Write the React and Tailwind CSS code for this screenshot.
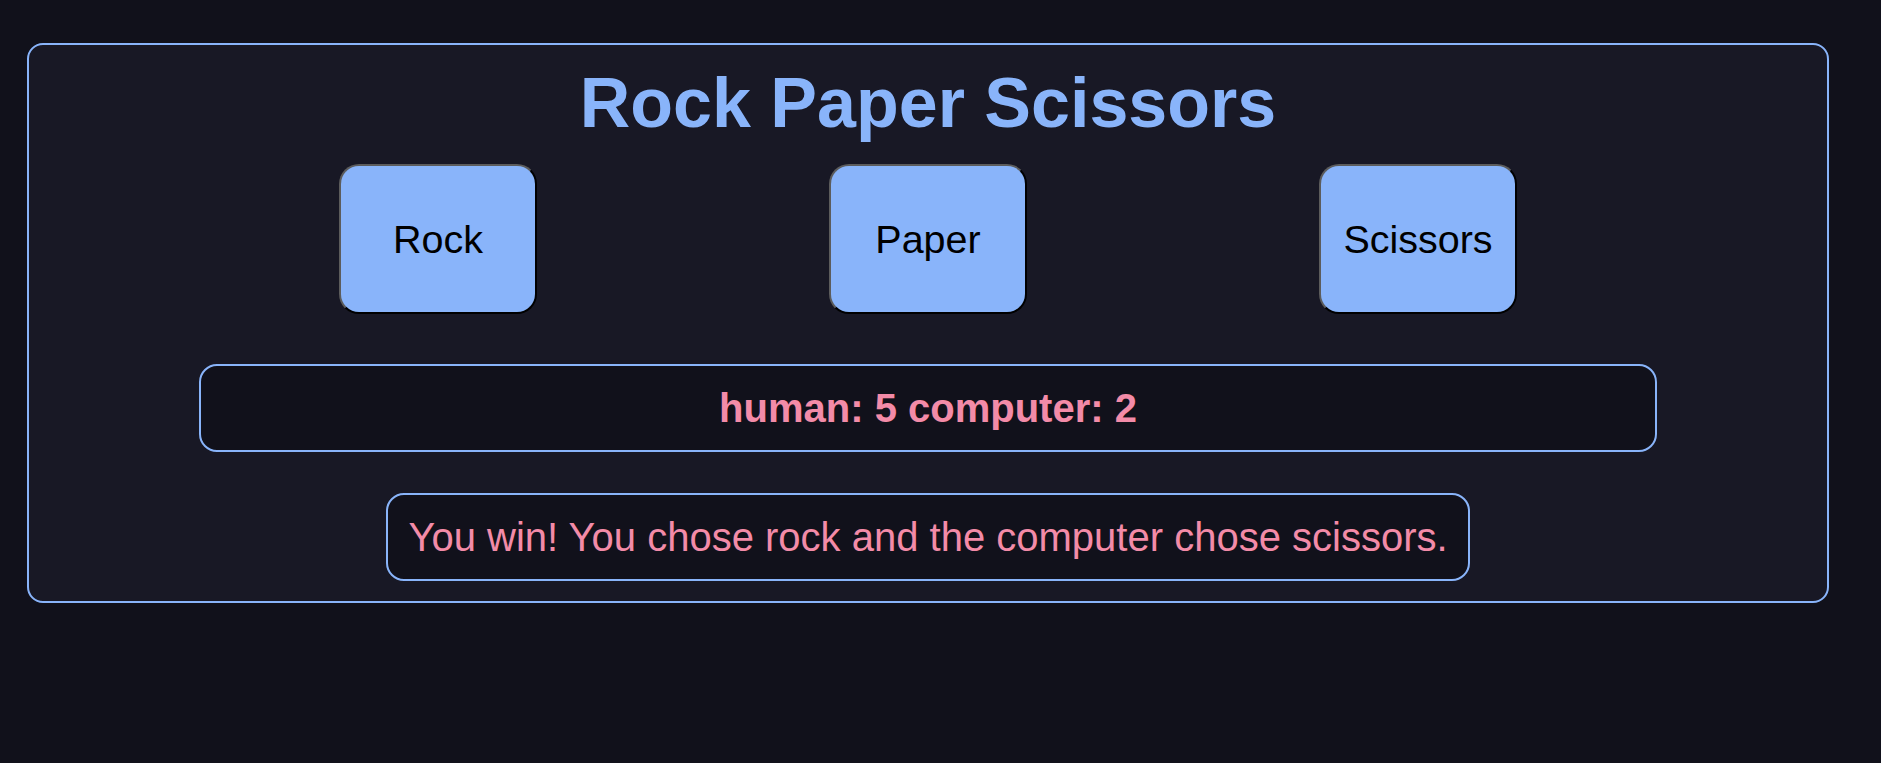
import { useState } from 'react';

const CHOICES = ['Rock', 'Paper', 'Scissors'];

const App = () => {
  const [score] = useState({ human: 5, computer: 2 });
  const [message] = useState('You win! You chose rock and the computer chose scissors.');

  return (
    <div
      className="min-h-[763px] w-full bg-[#11111b] pt-[43px]"
      style={{ fontFamily: '"Liberation Sans", Arial, sans-serif' }}
    >
      {/* Game card */}
      <div className="ml-[27px] flex w-[1802px] flex-col items-center rounded-[16px] border-2 border-[#89b4fa] bg-[#181825] pt-[19px] pb-[20px]">
        <h1 className="text-[70px] font-bold leading-[79px] text-[#89b4fa]">
          Rock Paper Scissors
        </h1>

        {/* Choices */}
        <div className="mt-[21px] flex justify-center gap-[292px]">
          {CHOICES.map((choice) => (
            <button
              key={choice}
              className="flex h-[150px] w-[198px] items-center justify-center rounded-[20px] border-2 border-t-[#5c5c5c] border-l-[#5c5c5c] border-r-black border-b-black bg-[#89b4fa] pt-[2px] text-[39.5px] text-black"
            >
              {choice}
            </button>
          ))}
        </div>

        {/* Score */}
        <div className="mt-[50px] flex h-[88px] w-[1458px] items-center justify-center rounded-[18px] border-2 border-[#89b4fa] bg-[#11111b]">
          <span className="text-[40px] font-bold text-[#f38ba8]">
            human: {score.human} computer: {score.computer}
          </span>
        </div>

        {/* Result */}
        <div className="mt-[41px] flex h-[88px] items-center rounded-[18px] border-2 border-[#89b4fa] bg-[#11111b] px-[20px]">
          <span className="text-[40px] text-[#f38ba8]">{message}</span>
        </div>
      </div>
    </div>
  );
};

export default App;
